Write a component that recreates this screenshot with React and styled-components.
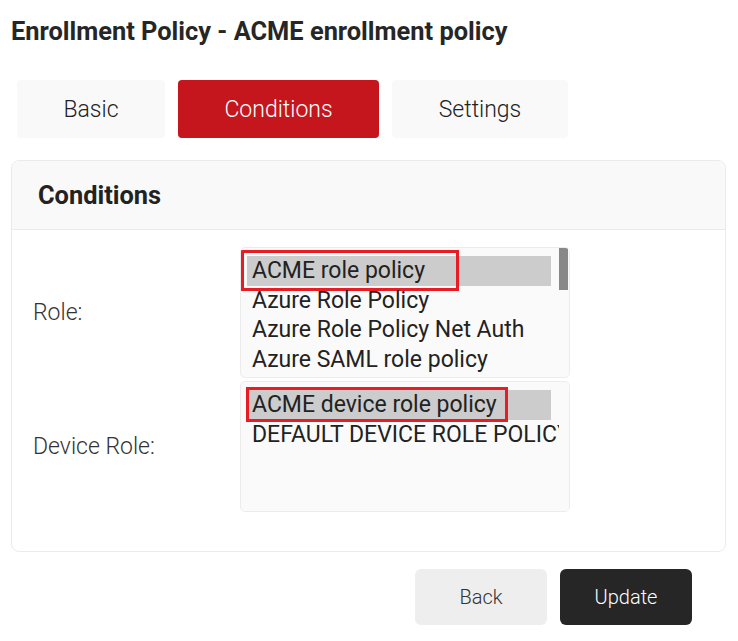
import React from "react";
import styled, { createGlobalStyle } from "styled-components";

const Global = createGlobalStyle`
  html, body { margin: 0; padding: 0; background: #ffffff; }
  body { font-family: Roboto, "Noto Sans", Arial, sans-serif; color: #222; }
`;

const Page = styled.div`
  width: 738px;
  height: 641px;
  box-sizing: border-box;
  padding: 15px 12px 0 11px;
  display: flex;
  flex-direction: column;
`;

const Title = styled.h1`
  margin: 0;
  font-size: 25.4px;
  font-weight: 700;
  line-height: 32px;
  color: #262626;
`;

const Tabs = styled.div`
  display: flex;
  gap: 13px;
  margin: 33px 0 0 6px;
`;

const Tab = styled.button`
  height: 58px;
  width: ${(p) => p.$w}px;
  border: none;
  border-radius: 4px;
  background: ${(p) => (p.$active ? "#c4161c" : "#f9f9f9")};
  color: ${(p) => (p.$active ? "#ffffff" : "#222")};
  font-family: Roboto, sans-serif;
  font-size: 23px;
  font-weight: 300;
  padding: 0;
`;

const Card = styled.section`
  margin-top: 22px;
  border: 1px solid #ebebeb;
  border-radius: 8px;
  overflow: hidden;
  width: 715px;
  box-sizing: border-box;
`;

const CardHeader = styled.div`
  height: 68px;
  background: #f9f9f9;
  border-bottom: 1px solid #ebebeb;
  display: flex;
  align-items: center;
  padding-left: 26px;
  font-size: 25.4px;
  font-weight: 700;
  color: #222;
`;

const CardBody = styled.div`
  padding: 17px 0 39px;
  display: flex;
  flex-direction: column;
  gap: 3px;
`;

const Row = styled.div`
  display: flex;
  align-items: center;
`;

const Label = styled.label`
  width: 207px;
  padding-left: 21px;
  font-size: 23px;
  font-weight: 300;
  color: #333;
`;

const ListBox = styled.div`
  width: 330px;
  height: 131px;
  box-sizing: border-box;
  border: 1px solid #ececec;
  border-radius: 5px;
  background: #fafafa;
  display: flex;
  overflow: hidden;
`;

const Options = styled.div`
  flex: 1;
  padding: 8px 8px 0 6px;
  overflow: hidden;
  min-width: 0;
`;

const Option = styled.div`
  position: relative;
  height: 29.5px;
  line-height: 29.5px;
  padding-left: 5px;
  font-size: 23px;
  font-weight: 400;
  color: #222;
  white-space: nowrap;
  background: ${(p) => (p.$selected ? "#cccccc" : "transparent")};
  margin-right: ${(p) => (p.$clip ? "-8px" : "0")};
`;

const Highlight = styled.span`
  position: absolute;
  left: ${(p) => p.$l}px;
  top: ${(p) => p.$t}px;
  width: ${(p) => p.$w}px;
  height: ${(p) => p.$h}px;
  box-sizing: border-box;
  border: 3px solid #e81c24;
  pointer-events: none;
`;

const Track = styled.div`
  width: 10px;
  background: #fafafa;
  display: flex;
  flex-direction: column;
`;

const Thumb = styled.div`
  height: 42px;
  width: 9px;
  background: #888888;
`;

const Actions = styled.div`
  display: flex;
  justify-content: flex-end;
  gap: 13px;
  margin: 17px 34px 0 0;
`;

const Button = styled.button`
  width: 132px;
  height: 56px;
  border: none;
  border-radius: 6px;
  font-family: Roboto, sans-serif;
  font-size: 20px;
  font-weight: 300;
  background: ${(p) => (p.$primary ? "#262626" : "#eeeeee")};
  color: ${(p) => (p.$primary ? "#ffffff" : "#333")};
`;

export default function App() {
  return (
    <>
      <Global />
      <Page>
        <Title>Enrollment Policy - ACME enrollment policy</Title>
        <Tabs>
          <Tab $w={148}>Basic</Tab>
          <Tab $w={201} $active>
            Conditions
          </Tab>
          <Tab $w={176}>Settings</Tab>
        </Tabs>
        <Card>
          <CardHeader>Conditions</CardHeader>
          <CardBody>
            <Row>
              <Label>Role:</Label>
              <ListBox>
                <Options>
                  <Option $selected>
                    ACME role policy
                    <Highlight $l={-6} $t={-6} $w={218} $h={41} />
                  </Option>
                  <Option>Azure Role Policy</Option>
                  <Option>Azure Role Policy Net Auth</Option>
                  <Option>Azure SAML role policy</Option>
                </Options>
                <Track>
                  <Thumb />
                </Track>
              </ListBox>
            </Row>
            <Row>
              <Label>Device Role:</Label>
              <ListBox>
                <Options>
                  <Option $selected>
                    ACME device role policy
                    <Highlight $l={-1} $t={-3} $w={262} $h={35} />
                  </Option>
                  <Option $clip>DEFAULT DEVICE ROLE POLICY</Option>
                </Options>
                <Track />
              </ListBox>
            </Row>
          </CardBody>
        </Card>
        <Actions>
          <Button>Back</Button>
          <Button $primary>Update</Button>
        </Actions>
      </Page>
    </>
  );
}
